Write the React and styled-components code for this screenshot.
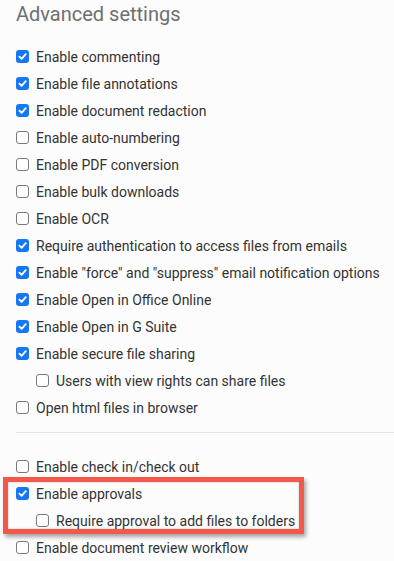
import React from "react";
import styled, { createGlobalStyle } from "styled-components";

const Global = createGlobalStyle`
  html, body { margin: 0; padding: 0; background: #fcfcfc; }
  body { font-family: Roboto, "Liberation Sans", Arial, sans-serif; }
`;

const Page = styled.div`
  padding: 2px 0 0 16px;
  width: 394px;
  box-sizing: border-box;
`;

const Title = styled.h2`
  margin: 0;
  font-size: 20px;
  line-height: 24px;
  font-weight: 400;
  color: #6f6f6f;
`;

const List = styled.div`
  display: flex;
  flex-direction: column;
  margin-top: ${(p) => p.$top}px;
`;

const Row = styled.label`
  display: flex;
  align-items: center;
  gap: 7px;
  height: 27px;
  padding-left: ${(p) => (p.$indent ? 20 : 0)}px;
  font-size: 14px;
  color: #333;
  white-space: nowrap;
`;

const Box = styled.span`
  width: 13px;
  height: 13px;
  box-sizing: border-box;
  border-radius: 3px;
  flex: none;
  display: flex;
  align-items: center;
  justify-content: center;
  background: ${(p) => (p.$checked ? "#1677f2" : "#fff")};
  border: ${(p) => (p.$checked ? "none" : "1px solid #7a7a7a")};
`;

const Divider = styled.hr`
  margin: 11px 0 0 0;
  border: none;
  height: 1px;
  background: #e4e4e4;
`;

const Highlight = styled.div`
  position: relative;
  display: flex;
  flex-direction: column;
  &::after {
    content: "";
    position: absolute;
    top: -3px;
    left: -13px;
    width: 301px;
    height: 57px;
    box-sizing: border-box;
    border: 5px solid #f2594b;
    box-shadow: 2px 3px 4px rgba(0, 0, 0, 0.35), inset 0 0 2px rgba(0, 0, 0, 0.3);
    pointer-events: none;
  }
`;

const Check = () => (
  <svg width="9" height="9" viewBox="0 0 10 10">
    <path d="M1.6 5.2 L4 7.6 L8.6 2.4" fill="none" stroke="#fff" strokeWidth="2" strokeLinecap="round" strokeLinejoin="round" />
  </svg>
);

const Option = ({ checked, indent, children }) => (
  <Row $indent={indent}>
    <Box $checked={checked}>{checked && <Check />}</Box>
    {children}
  </Row>
);

const first = [
  [true, false, "Enable commenting"],
  [true, false, "Enable file annotations"],
  [true, false, "Enable document redaction"],
  [false, false, "Enable auto-numbering"],
  [false, false, "Enable PDF conversion"],
  [false, false, "Enable bulk downloads"],
  [false, false, "Enable OCR"],
  [true, false, "Require authentication to access files from emails"],
  [true, false, "Enable \"force\" and \"suppress\" email notification options"],
  [true, false, "Enable Open in Office Online"],
  [true, false, "Enable Open in G Suite"],
  [true, false, "Enable secure file sharing"],
  [false, true, "Users with view rights can share files"],
  [false, false, "Open html files in browser"],
];

export default function App() {
  return (
    <>
      <Global />
      <Page>
        <Title>Advanced settings</Title>
        <List $top={17}>
          {first.map(([c, i, t]) => (
            <Option key={t} checked={c} indent={i}>{t}</Option>
          ))}
        </List>
        <Divider />
        <List $top={20}>
          <Option checked={false}>Enable check in/check out</Option>
          <Highlight>
            <Option checked>Enable approvals</Option>
            <Option checked={false} indent>Require approval to add files to folders</Option>
          </Highlight>
          <Option checked={false}>Enable document review workflow</Option>
        </List>
      </Page>
    </>
  );
}
